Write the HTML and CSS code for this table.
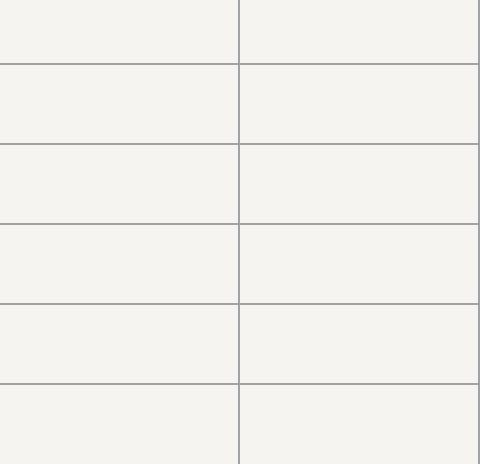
FILE: index.html
```html
<!DOCTYPE html>
<html>
<head>
<meta charset="utf-8">
<link rel="stylesheet" href="styles.css">
</head>
<body>
<div class="grid">
  <div class="cell"></div><div class="cell"></div>
  <div class="cell"></div><div class="cell"></div>
  <div class="cell"></div><div class="cell"></div>
  <div class="cell"></div><div class="cell"></div>
  <div class="cell"></div><div class="cell"></div>
  <div class="cell"></div><div class="cell"></div>
</div>
</body>
</html>
```
FILE: styles.css
```css
html, body {
  margin: 0;
  padding: 0;
  background: #f5f4f0;
  overflow: hidden;
}
.grid {
  display: grid;
  grid-template-columns: 240px 240px;
  grid-template-rows: repeat(5, 80px) 81px;
  margin-top: -17px;
}
.cell {
  box-sizing: border-box;
  border-top: 2px solid #a0a3a6;
  border-right: 2px solid #a0a3a6;
}
```
